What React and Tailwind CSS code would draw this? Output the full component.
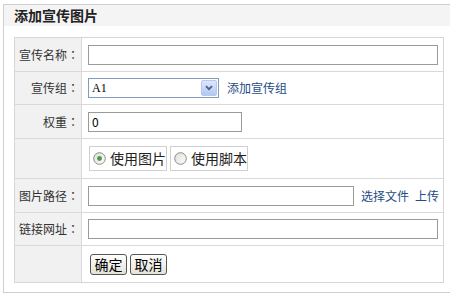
const Label = ({ children }) => (
  <div className="w-[67px] shrink-0 h-full flex items-center justify-end pr-[2px] bg-[#f1f1f1] border-r border-[#d9d9d9] text-[12px] text-[#333]">
    {children && (
      <>
        <span>{children}</span>
        <span className="font-['Noto_Sans_CJK_TC',sans-serif]">：</span>
      </>
    )}
  </div>
);

const TextBox = ({ width, value = '' }) => (
  <div
    className="h-[20px] border border-[#9a9a9a] bg-white flex items-center pl-[3px] text-[12px] text-black"
    style={{ width }}
  >
    {value}
  </div>
);

const Radio = ({ checked }) => (
  <svg width="13" height="13" viewBox="0 0 13 13" className="shrink-0">
    <defs>
      <linearGradient id={checked ? 'rg1' : 'rg2'} x1="0" y1="0" x2="1" y2="1">
        <stop offset="0" stopColor="#dcdcd7" />
        <stop offset="1" stopColor="#ffffff" />
      </linearGradient>
    </defs>
    <circle cx="6.5" cy="6.5" r="5.8" fill={`url(#${checked ? 'rg1' : 'rg2'})`} stroke="#8a8a8a" strokeWidth="1" />
    {checked && <circle cx="6.5" cy="6.5" r="2.4" fill="#4a9a45" />}
  </svg>
);

export default function App() {
  return (
    <div className="w-[450px] h-[301px] overflow-hidden bg-white font-['Noto_Sans_CJK_SC',sans-serif]">
      <div className="mt-[4px] ml-[3px] w-[470px] border border-[#cfcfcf] pb-[9px]">
        {/* title */}
        <div className="h-[21px] bg-[#f4f4f4] pl-[10px] text-[14px] font-bold leading-[21px] text-[#222]">
          添加宣传图片
        </div>

        {/* form table */}
        <div className="mt-[11px] ml-[10px] w-[430px] border border-[#d6d6d6]">
          <div className="h-[34px] flex items-center border-b border-[#d9d9d9]">
            <Label>宣传名称</Label>
            <div className="pl-[6px]">
              <TextBox width={350} />
            </div>
          </div>

          <div className="h-[33px] flex items-center border-b border-[#d9d9d9]">
            <Label>宣传组</Label>
            <div className="pl-[6px] flex items-center">
              <div className="w-[131px] h-[20px] border border-[#7f9db9] bg-white flex items-center justify-between pl-[3px] pr-[1px]">
                <span className="text-[12px] text-black font-['Liberation_Serif',serif]">A1</span>
                <div className="w-[16px] h-[16px] rounded-[2px] border border-[#b6c8f2] bg-gradient-to-b from-[#dde7fd] to-[#b3c7f4] flex items-center justify-center">
                  <svg width="8" height="6" viewBox="0 0 8 6">
                    <path d="M1 1.2 L4 4.2 L7 1.2" fill="none" stroke="#4d6185" strokeWidth="1.8" />
                  </svg>
                </div>
              </div>
              <span className="ml-[8px] text-[12px] text-[#254b85]">添加宣传组</span>
            </div>
          </div>

          <div className="h-[34px] flex items-center border-b border-[#d9d9d9]">
            <Label>权重</Label>
            <div className="pl-[6px]">
              <TextBox width={154} value="0" />
            </div>
          </div>

          <div className="h-[40px] flex items-center border-b border-[#d9d9d9]">
            <Label />
            <div className="pl-[7px] flex items-center gap-[3px]">
              <div className="h-[25px] w-[78px] border border-[#d0d0d0] flex items-center pl-[3px] gap-[4px] text-[14px] text-[#222]">
                <Radio checked />
                <span>使用图片</span>
              </div>
              <div className="h-[25px] w-[78px] border border-[#d0d0d0] flex items-center pl-[3px] gap-[4px] text-[14px] text-[#222]">
                <Radio />
                <span>使用脚本</span>
              </div>
            </div>
          </div>

          <div className="h-[34px] flex items-center border-b border-[#d9d9d9]">
            <Label>图片路径</Label>
            <div className="pl-[6px] flex items-center">
              <TextBox width={266} />
              <span className="ml-[7px] text-[12px] text-[#254b85]">选择文件</span>
              <span className="ml-[6px] text-[12px] text-[#254b85]">上传</span>
            </div>
          </div>

          <div className="h-[33px] flex items-center border-b border-[#d9d9d9]">
            <Label>链接网址</Label>
            <div className="pl-[6px]">
              <TextBox width={350} />
            </div>
          </div>

          <div className="h-[36px] flex items-center">
            <Label />
            <div className="pl-[8px] flex items-center gap-[3px]">
              <div className="w-[37px] h-[21px] rounded-[3px] border border-[#555] bg-gradient-to-b from-white to-[#e4e2d8] flex items-center justify-center text-[14px] text-black">
                确定
              </div>
              <div className="w-[37px] h-[21px] rounded-[3px] border border-[#555] bg-gradient-to-b from-white to-[#e4e2d8] flex items-center justify-center text-[14px] text-black">
                取消
              </div>
            </div>
          </div>
        </div>
      </div>
    </div>
  );
}
